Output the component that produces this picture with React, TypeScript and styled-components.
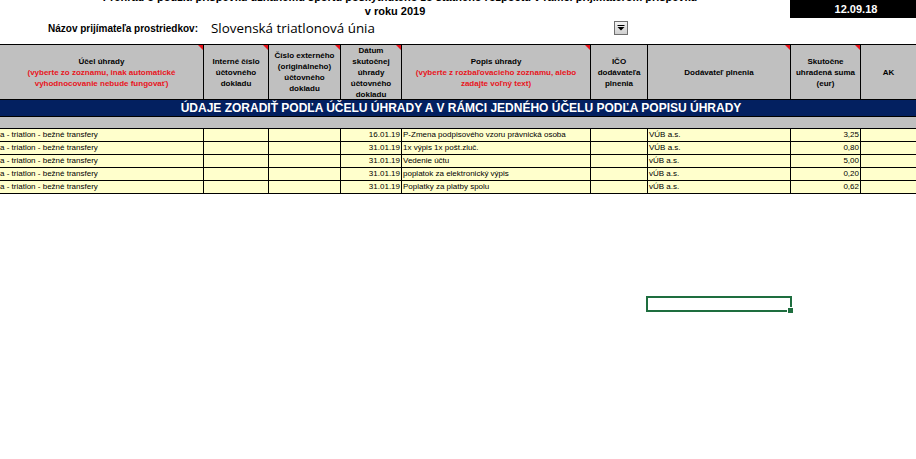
import React from "react";
import styled, { createGlobalStyle, css } from "styled-components";

const GlobalStyle = createGlobalStyle`
  html, body { margin: 0; padding: 0; background: #fff; }
  body {
    font-family: "Liberation Sans", Arial, sans-serif;
    overflow: hidden;
    width: 916px;
    height: 459px;
  }
`;

const Sheet = styled.div`
  position: relative;
  width: 916px;
  height: 459px;
  overflow: hidden;
  background: #fff;
  color: #000;
`;

const TopArea = styled.div`
  display: grid;
  grid-template-columns: 790px 126px;
  height: 44px;
`;

const TitleBlock = styled.div`
  display: flex;
  flex-direction: column;
  overflow: hidden;
`;

const ClippedTitle = styled.div`
  height: 4px;
  overflow: hidden;
  display: flex;
  justify-content: center;
  padding-left: 10px;
`;

const ClippedTitleText = styled.div`
  font-size: 11px;
  font-weight: bold;
  line-height: 12px;
  margin-top: -9px;
  white-space: nowrap;
`;

const Year = styled.div`
  font-size: 11px;
  font-weight: bold;
  line-height: 14px;
  height: 14px;
  text-align: center;
`;

const NameRow = styled.div`
  display: flex;
  align-items: center;
  height: 18px;
  margin-top: 1px;
`;

const NameLabel = styled.div`
  width: 198px;
  text-align: right;
  font-size: 10px;
  font-weight: bold;
  white-space: nowrap;
`;

const NameValue = styled.div`
  margin-left: 13px;
  font-family: "Open Sans", "DejaVu Sans", sans-serif;
  font-size: 13.4px;
  white-space: nowrap;
`;

const DropButton = styled.div`
  margin-left: auto;
  margin-right: 162px;
  width: 14px;
  height: 14px;
  box-sizing: border-box;
  border: 1px solid #6f6f6f;
  background: linear-gradient(#f4f4f4, #cfcfcf);
  display: flex;
  align-items: center;
  justify-content: center;
`;

const DateBox = styled.div`
  background: #000;
  color: #fff;
  height: 18px;
  font-size: 11px;
  font-weight: bold;
  display: flex;
  align-items: center;
  justify-content: center;
  padding-left: 6px;
  box-sizing: border-box;
`;

const Table = styled.div`
  display: grid;
  grid-template-columns: 204px 65px 72px 61px 189px 57px 143px 70px 55px;
  border-top: 1px solid #000;
`;

const HeaderCell = styled.div<{ $note?: boolean; $last?: boolean }>`
  position: relative;
  box-sizing: border-box;
  height: 55px;
  background: #c0c0c0;
  border-right: ${(p) => (p.$last ? "none" : "1px solid #000")};
  border-bottom: 1px solid #000;
  display: flex;
  flex-direction: column;
  align-items: center;
  justify-content: center;
  text-align: center;
  font-size: 8px;
  font-weight: bold;
  line-height: 11px;
  overflow: hidden;
  padding: 0 2px;
  ${(p) =>
    p.$note &&
    css`
      &::after {
        content: "";
        position: absolute;
        top: 0;
        right: 0;
        width: 0;
        height: 0;
        border-top: 5px solid #e8141c;
        border-left: 5px solid transparent;
      }
    `}
`;

const RedNote = styled.span`
  color: #e8141c;
  display: block;
`;

const Band = styled.div`
  grid-column: 1 / -1;
  box-sizing: border-box;
  height: 17px;
  background: #032060;
  border-bottom: 1px solid #000;
  color: #fff;
  font-size: 12px;
  font-weight: bold;
  line-height: 16px;
  text-align: center;
  padding-left: 6px;
  white-space: nowrap;
`;

const GrayRow = styled.div`
  grid-column: 1 / -1;
  box-sizing: border-box;
  height: 12px;
  background: #c0c0c0;
  border-bottom: 1px solid #000;
`;

const Cell = styled.div<{ $right?: boolean; $last?: boolean }>`
  box-sizing: border-box;
  height: 13px;
  background: #ffffcc;
  border-right: ${(p) => (p.$last ? "none" : "1px solid #000")};
  border-bottom: 1px solid #000;
  font-size: 8px;
  line-height: 12px;
  white-space: nowrap;
  overflow: hidden;
  padding: 0 1px;
  text-align: ${(p) => (p.$right ? "right" : "left")};
`;

const FirstCellText = styled.span`
  margin-left: -1px;
`;

const Selection = styled.div`
  position: absolute;
  left: 646px;
  top: 296px;
  width: 146px;
  height: 16px;
  box-sizing: border-box;
  border: 2px solid #1e6e3f;
`;

const Handle = styled.div`
  position: absolute;
  right: -4px;
  bottom: -4px;
  width: 5px;
  height: 5px;
  background: #1e6e3f;
  border: 1px solid #fff;
`;

type Row = { date: string; desc: string; supplier: string; amount: string };

const rows: Row[] = [
  { date: "16.01.19", desc: "P-Zmena podpisového vzoru právnická osoba", supplier: "VÚB a.s.", amount: "3,25" },
  { date: "31.01.19", desc: "1x výpis 1x pošt.zluč.", supplier: "VÚB a.s.", amount: "0,80" },
  { date: "31.01.19", desc: "Vedenie účtu", supplier: "vÚB a.s.", amount: "5,00" },
  { date: "31.01.19", desc: "poplatok za elektronický výpis", supplier: "vÚB a.s.", amount: "0,20" },
  { date: "31.01.19", desc: "Poplatky za platby spolu", supplier: "vÚB a.s.", amount: "0,62" },
];

export default function App() {
  return (
    <Sheet>
      <GlobalStyle />
      <TopArea>
        <TitleBlock>
          <ClippedTitle>
            <ClippedTitleText>
              Prehľad o použití príspevku uznanému športu poskytnutého zo štátneho rozpočtu v rámci prijímateľom príspevku
            </ClippedTitleText>
          </ClippedTitle>
          <Year>v roku 2019</Year>
          <NameRow>
            <NameLabel>Názov prijímateľa prostriedkov:</NameLabel>
            <NameValue>Slovenská triatlonová únia</NameValue>
            <DropButton>
              <svg width="8" height="6" viewBox="0 0 8 6">
                <rect x="0.5" y="0" width="7" height="1" fill="#000" />
                <path d="M0.5 2 L7.5 2 L4 5.5 Z" fill="#000" />
              </svg>
            </DropButton>
          </NameRow>
        </TitleBlock>
        <DateBox>12.09.18</DateBox>
      </TopArea>

      <Table>
        <HeaderCell $note>
          <span>Účel úhrady</span>
          <RedNote>(vyberte zo zoznamu, inak automatické vyhodnocovanie nebude fungovať)</RedNote>
        </HeaderCell>
        <HeaderCell $note>Interné číslo účtovného dokladu</HeaderCell>
        <HeaderCell $note>Číslo externého (originálneho) účtovného dokladu</HeaderCell>
        <HeaderCell $note>Dátum skutočnej úhrady účtovného dokladu</HeaderCell>
        <HeaderCell $note>
          <span>Popis úhrady</span>
          <RedNote>(vyberte z rozbaľovacieho zoznamu, alebo zadajte voľný text)</RedNote>
        </HeaderCell>
        <HeaderCell>IČO dodávateľa plnenia</HeaderCell>
        <HeaderCell $note>Dodávateľ plnenia</HeaderCell>
        <HeaderCell $note>Skutočne uhradená suma (eur)</HeaderCell>
        <HeaderCell $last>AK</HeaderCell>

        <Band>ÚDAJE ZORADIŤ PODĽA ÚČELU ÚHRADY A V RÁMCI JEDNÉHO ÚČELU PODĽA POPISU ÚHRADY</Band>
        <GrayRow />

        {rows.map((r, i) => (
          <React.Fragment key={i}>
            <Cell>
              <FirstCellText>a - triatlon - bežné transfery</FirstCellText>
            </Cell>
            <Cell />
            <Cell />
            <Cell $right>{r.date}</Cell>
            <Cell>{r.desc}</Cell>
            <Cell />
            <Cell>{r.supplier}</Cell>
            <Cell $right>{r.amount}</Cell>
            <Cell $last />
          </React.Fragment>
        ))}
      </Table>

      <Selection>
        <Handle />
      </Selection>
    </Sheet>
  );
}
